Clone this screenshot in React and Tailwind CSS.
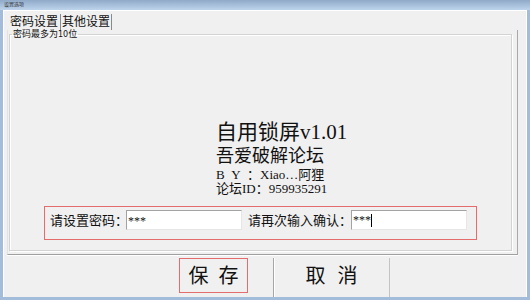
export default function App() {
  const font = "font-['Liberation_Serif','Noto_Sans_CJK_SC',serif]";

  return (
    <div className={`w-[530px] h-[300px] flex flex-col bg-[#a3bcd9] text-[#111] ${font}`}>
      {/* title bar */}
      <div className="h-[10px] bg-gradient-to-b from-[#8fa9c8] to-[#bed4ec] pl-[4px] text-[5px] leading-[10px] text-[#333]">
        设置选项
      </div>

      {/* window body */}
      <div className="flex-1 mx-[3px] mb-[3px] bg-[#f0f0f0] border-t border-l border-r border-white flex flex-col">
        {/* tabs */}
        <div className="h-[19px] flex items-end pl-[6px]">
          <div className="h-[16px] pr-[2px] border-r border-[#8a8a8a] text-[12px] leading-[17px]">
            密码设置
          </div>
          <div className="h-[16px] pl-[1px] pr-[1px] border-r border-[#8a8a8a] text-[12px] leading-[17px]">
            其他设置
          </div>
        </div>

        {/* tab panel */}
        <div className="ml-[3px] w-[511px] h-[225px] border-l border-l-[#e2e2e2] border-r border-r-[#a9a9a9] border-b border-b-[#a0a0a0] shadow-[0_1px_0_#ffffff] flex">
          <fieldset className="ml-[1px] w-[503px] h-[221px] border border-[#d3d3d3] shadow-[inset_1px_1px_0_#ffffff,1px_1px_0_#ffffff]">
            <legend className="ml-[2px] px-[1px] text-[9px] leading-[9px]">
              密码最多为<span className="font-['DejaVu_Sans',sans-serif] text-[8px]">10</span>位
            </legend>

            <div className="pt-[80px] pl-[206px]">
              <div className="text-[21px] leading-[26px] whitespace-nowrap">自用锁屏v1.01</div>
              <div className="text-[18px] leading-[23px] whitespace-nowrap">吾爱破解论坛</div>
              <div className="text-[13px] leading-[14px] whitespace-nowrap">
                B{"\u2002"}Y{"\u2002"}：Xiao…阿狸
              </div>
              <div className="text-[13px] leading-[13px] whitespace-nowrap">论坛ID：959935291</div>
            </div>

            {/* password row */}
            <div className="mt-[11px] ml-[34px] w-[433px] h-[34px] border border-[#e46c6c] flex items-start pt-[3px] pl-[5px] text-[13px]">
              <div className="w-[76px] h-[20px] leading-[21px] whitespace-nowrap">请设置密码：</div>
              <div className="w-[116px] h-[20px] bg-white border border-t-[#a3a3a3] border-l-[#a3a3a3] border-b-[#e6e6e6] border-r-[#e6e6e6] pl-[1px] text-[12px] leading-[20px]">
                ***
              </div>
              <div className="ml-[6px] w-[103px] h-[20px] leading-[21px] whitespace-nowrap">请再次输入确认：</div>
              <div className="w-[116px] h-[20px] bg-white border border-t-[#a3a3a3] border-l-[#a3a3a3] border-b-[#e6e6e6] border-r-[#e6e6e6] pl-[1px] text-[12px] leading-[20px] flex items-center">
                <span>***</span>
                <span className="w-px h-[13px] bg-black" />
              </div>
            </div>
          </fieldset>
        </div>

        {/* buttons */}
        <div className="flex-1 flex pl-[153px]">
          <div className="w-[116px] flex justify-center items-start pt-[3px] pr-[3px]">
            <button className="w-[69px] h-[35px] border border-[#e46c6c] flex items-center justify-center gap-[10px] text-[20px] leading-[20px]">
              <span>保</span>
              <span>存</span>
            </button>
          </div>
          <button className="mt-[3px] w-[117px] border-l border-l-[#a6a6a6] border-r border-r-[#c4c4c4] shadow-[inset_1px_0_0_#ffffff] flex items-center justify-center gap-[12px] pb-[4px] text-[20px] leading-[20px]">
            <span>取</span>
            <span>消</span>
          </button>
        </div>
      </div>
    </div>
  );
}
